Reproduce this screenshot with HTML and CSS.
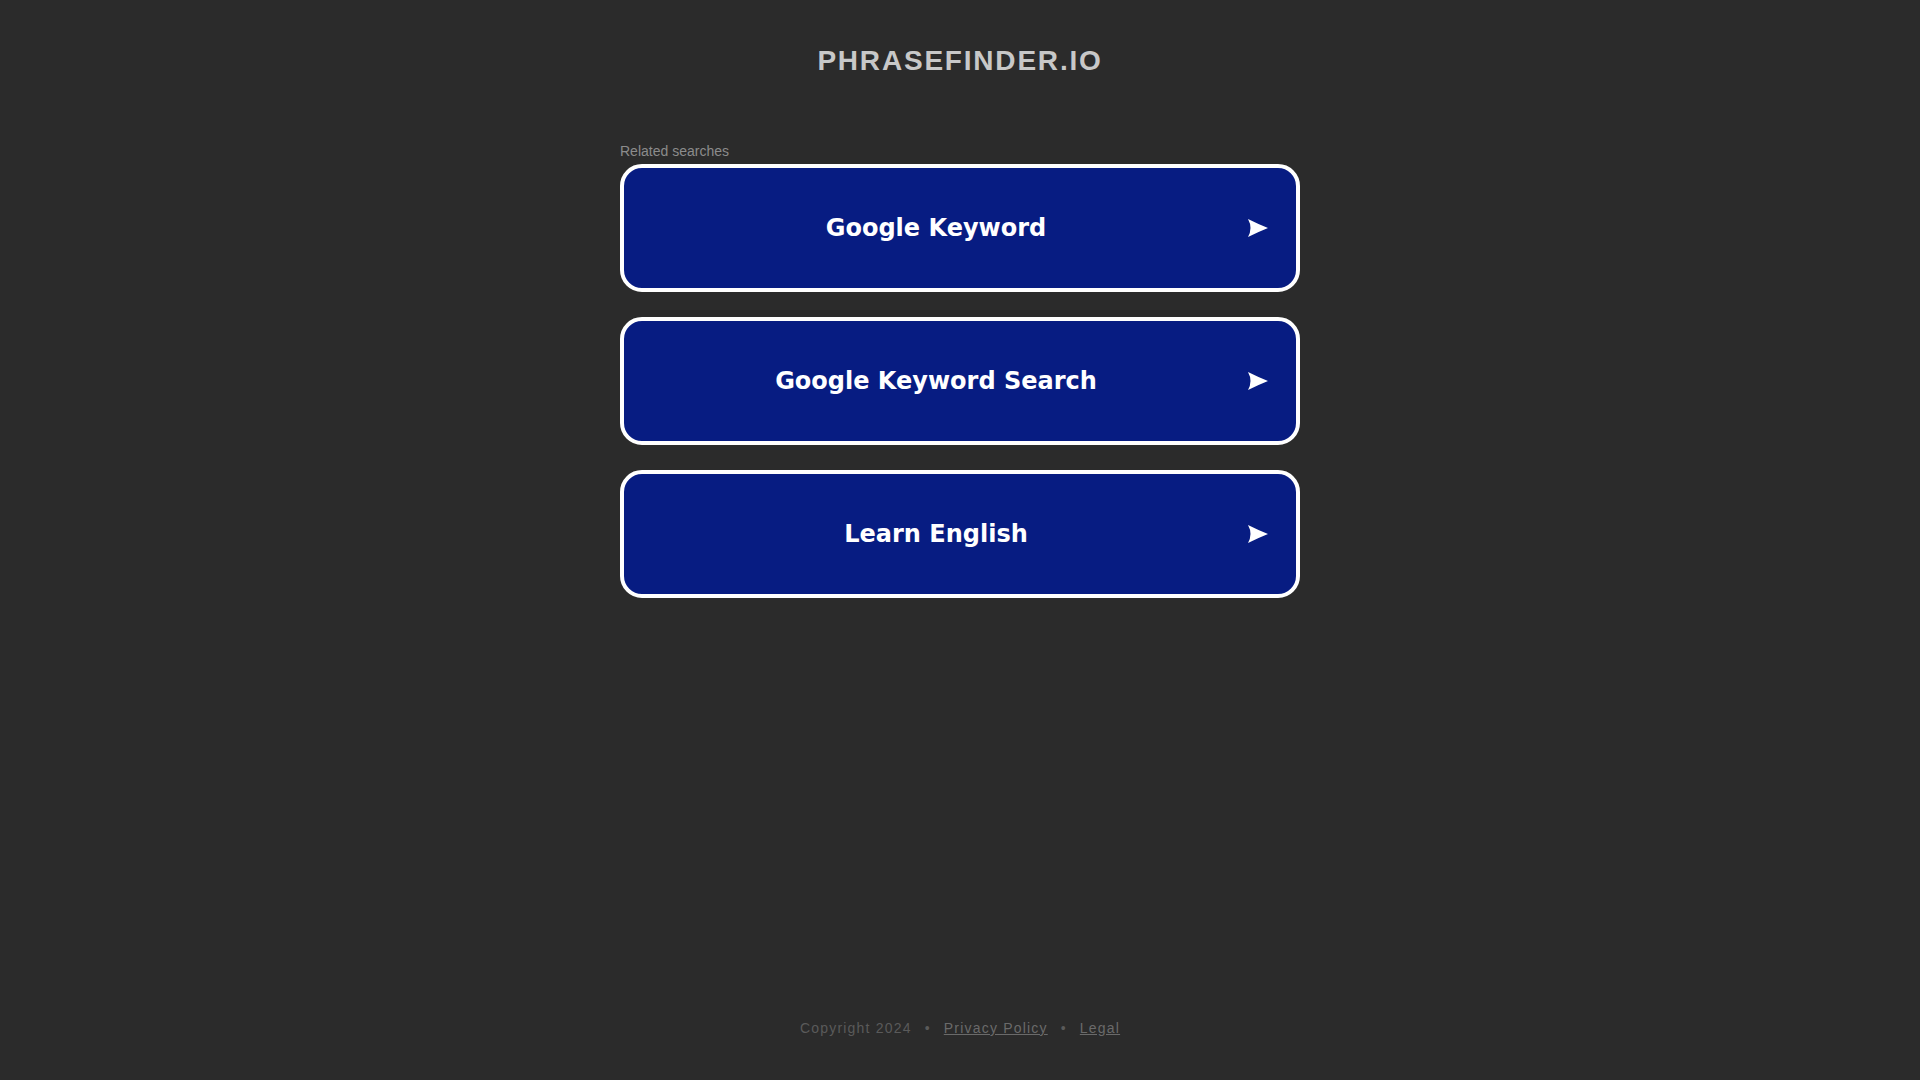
FILE: index.html
```html
<!DOCTYPE html>
<html lang="en">
<head>
<meta charset="utf-8">
<title>phrasefinder.io</title>
<link rel="stylesheet" href="styles.css">
</head>
<body>
<div class="page">
  <header class="header">
    <h1 class="title">PHRASEFINDER.IO</h1>
  </header>
  <main class="content">
    <div class="label">Related searches</div>
    <ul class="links">
      <li><a class="link" href="#"><span class="link-text">Google Keyword</span><svg class="arrow" viewBox="0 0 20 18" width="20" height="18"><path d="M0 0 Q10 5 20 9 Q10 13 0 18 Q5 9 0 0Z" fill="#fff"/></svg></a></li>
      <li><a class="link" href="#"><span class="link-text">Google Keyword Search</span><svg class="arrow" viewBox="0 0 20 18" width="20" height="18"><path d="M0 0 Q10 5 20 9 Q10 13 0 18 Q5 9 0 0Z" fill="#fff"/></svg></a></li>
      <li><a class="link" href="#"><span class="link-text">Learn English</span><svg class="arrow" viewBox="0 0 20 18" width="20" height="18"><path d="M0 0 Q10 5 20 9 Q10 13 0 18 Q5 9 0 0Z" fill="#fff"/></svg></a></li>
    </ul>
  </main>
  <footer class="footer">
    <span>Copyright 2024</span><span class="dot">•</span><a href="#">Privacy Policy</a><span class="dot">•</span><a href="#">Legal</a>
  </footer>
</div>
</body>
</html>
```
FILE: styles.css
```css
html, body {
  margin: 0;
  padding: 0;
  background: #2b2b2b;
  height: 100%;
}
.page {
  display: flex;
  flex-direction: column;
  min-height: 1080px;
  font-family: "Liberation Sans", Arial, sans-serif;
}
.header {
  display: flex;
  justify-content: center;
  padding-top: 45px;
}
.title {
  margin: 0;
  font-size: 28px;
  line-height: 32px;
  font-weight: bold;
  letter-spacing: 1.8px;
  color: #c8c8c8;
}
.content {
  width: 680px;
  margin: 0 auto;
  padding-top: 66px;
  flex: 1;
}
.label {
  font-size: 14px;
  line-height: 16px;
  color: #8c8c8c;
  margin-bottom: 5px;
}
.links {
  list-style: none;
  margin: 0;
  padding: 0;
  display: flex;
  flex-direction: column;
  gap: 25px;
}
.link {
  display: flex;
  align-items: center;
  box-sizing: border-box;
  height: 128px;
  background: #071c82;
  border: 4px solid #ffffff;
  border-radius: 22px;
  padding-right: 28px;
  text-decoration: none;
}
.link-text {
  flex: 1;
  text-align: center;
  font-family: "DejaVu Sans", Verdana, sans-serif;
  font-weight: bold;
  font-size: 24px;
  color: #ffffff;
}
.arrow {
  display: block;
  flex: none;
}
.footer {
  display: flex;
  justify-content: center;
  align-items: center;
  padding-bottom: 43px;
  font-size: 14px;
  line-height: 18px;
  letter-spacing: 1.2px;
  color: #5a5a5a;
}
.footer a {
  color: #6a6a6a;
  text-decoration: underline;
}
.dot {
  margin: 0 13px;
}
```
